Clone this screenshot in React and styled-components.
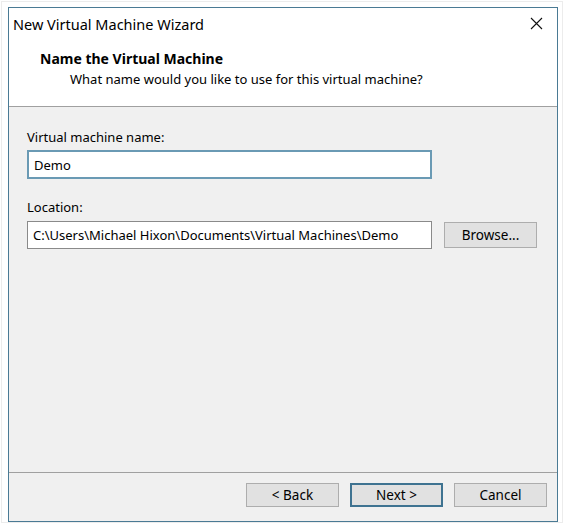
import React from 'react';
import styled, { createGlobalStyle } from 'styled-components';

const GlobalStyle = createGlobalStyle`
  html, body {
    margin: 0;
    padding: 0;
    background: #ffffff;
  }
  body {
    font-family: 'Noto Sans', 'Open Sans', sans-serif;
    color: #000;
  }
`;

const Frame = styled.div`
  width: 562px;
  height: 522px;
  margin: 1px;
  border: 1px solid #ececec;
  box-sizing: border-box;
  padding: 5px 0 0 6px;
`;

const Window = styled.div`
  width: 550px;
  height: 515px;
  box-sizing: border-box;
  border: 1px solid #4a7a94;
  background: #f0f0f0;
  display: flex;
  flex-direction: column;
`;

const TitleBar = styled.div`
  height: 31px;
  background: #fff;
  display: flex;
  align-items: center;
  justify-content: space-between;
  padding: 0 14px 0 4px;
  font-size: 14.5px;
`;

const Header = styled.div`
  background: #fff;
  height: 68px;
  box-sizing: border-box;
  padding: 11px 0 0 31px;
  border-bottom: 1px solid #a0a0a0;
`;

const HeaderTitle = styled.div`
  font-weight: bold;
  font-size: 14px;
  line-height: 18px;
`;

const HeaderSub = styled.div`
  font-size: 13px;
  line-height: 18px;
  margin: 2px 0 0 30px;
`;

const Content = styled.div`
  flex: 1;
  padding: 21px 18px 0 18px;
  display: flex;
  flex-direction: column;
`;

const Label = styled.div`
  font-size: 13px;
  line-height: 18px;
  margin-top: ${(p) => p.$top || 0}px;
  margin-bottom: ${(p) => p.$bottom || 4}px;
`;

const Row = styled.div`
  display: flex;
  align-items: center;
  gap: 12px;
`;

const TextBox = styled.div`
  width: 405px;
  height: ${(p) => (p.$focused ? 29 : 28)}px;
  box-sizing: border-box;
  background: #fff;
  border: ${(p) => (p.$focused ? '2px solid #6a9ab4' : '1px solid #8a8a8a')};
  display: flex;
  align-items: center;
  padding-left: ${(p) => (p.$focused ? 5 : 5)}px;
  font-size: 13px;
  white-space: nowrap;
  overflow: hidden;
`;

const Button = styled.button`
  width: 93px;
  height: ${(p) => p.$h || 24}px;
  box-sizing: border-box;
  background: #e1e1e1;
  border: ${(p) => (p.$default ? '2px solid #3f7391' : '1px solid #adadad')};
  font-family: inherit;
  font-size: 13.5px;
  color: #000;
  padding: 0;
  display: flex;
  align-items: center;
  justify-content: center;
`;

const Footer = styled.div`
  height: 49px;
  box-sizing: border-box;
  border-top: 1px solid #a0a0a0;
  display: flex;
  justify-content: flex-end;
  gap: 11px;
  padding: 10px 10px 0 0;
`;

function CloseIcon() {
  return (
    <svg width="13" height="13" viewBox="0 0 13 13">
      <path d="M1 1 L12 12 M12 1 L1 12" stroke="#111" strokeWidth="1.1" fill="none" />
    </svg>
  );
}

export default function App() {
  return (
    <>
      <GlobalStyle />
      <Frame>
        <Window>
          <TitleBar>
            <span>New Virtual Machine Wizard</span>
            <CloseIcon />
          </TitleBar>
          <Header>
            <HeaderTitle>Name the Virtual Machine</HeaderTitle>
            <HeaderSub>What name would you like to use for this virtual machine?</HeaderSub>
          </Header>
          <Content>
            <Label>Virtual machine name:</Label>
            <TextBox $focused>Demo</TextBox>
            <Label $top={19} $bottom={5}>Location:</Label>
            <Row>
              <TextBox>C:\Users\Michael Hixon\Documents\Virtual Machines\Demo</TextBox>
              <Button $h={26}>Browse...</Button>
            </Row>
          </Content>
          <Footer>
            <Button>&lt; Back</Button>
            <Button $default>Next &gt;</Button>
            <Button>Cancel</Button>
          </Footer>
        </Window>
      </Frame>
    </>
  );
}
